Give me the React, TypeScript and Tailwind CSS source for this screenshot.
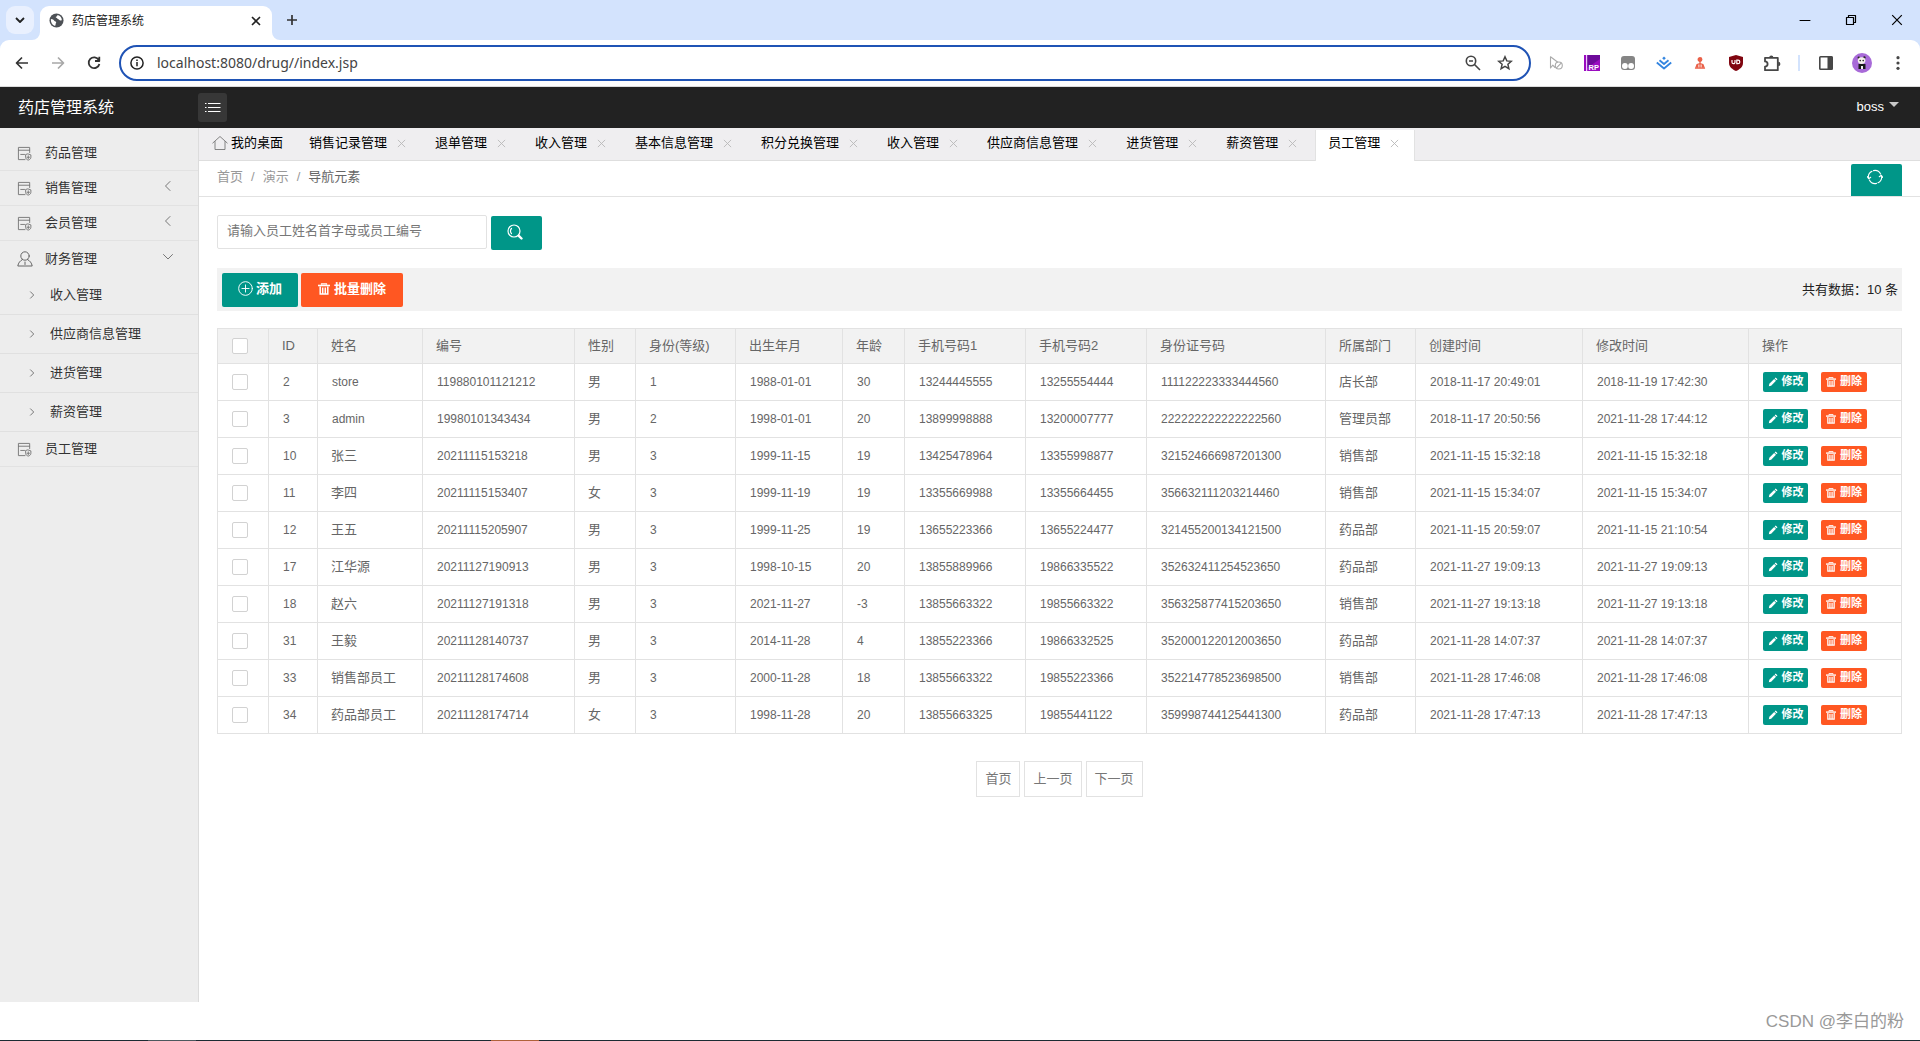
import React from "react";

const SANS = "font-['Liberation_Sans','Noto_Sans_CJK_SC',sans-serif]";

type IconProps = { className?: string };

const stroke = {
  fill: "none",
  stroke: "currentColor",
  strokeLinecap: "round" as const,
  strokeLinejoin: "round" as const,
};

function CloseIcon({ className }: IconProps) {
  return (
    <svg viewBox="0 0 10 10" className={className} {...stroke} strokeLinecap="butt">
      <path d="M1 1 L9 9 M9 1 L1 9" />
    </svg>
  );
}

function GlobeIcon() {
  return (
    <svg viewBox="0 0 16 16" className="size-[15px]">
      <circle cx="8" cy="8" r="7.5" fill="#4d5156" />
      <path d="M2 6.5c2 .2 3 .6 3.400 1.600.3.900 1.600.6 2.100 1.400.6 1-.7 1.700-.5 2.700.2.900-.6 1.600-1.200 1.500C3.300 12.700 1.700 10 2 6.500z" fill="#fff" />
      <path d="M8.500 2.100c1 .500.300 1.400-.500 1.600-1 .200-1 1.100-.2 1.300 1.200.3 1 1.500 2.200 1.700.9.200 1.200 1.300 2.200 1.200l1.500-.2C13.800 5 11.800 2.500 8.500 2.100z" fill="#fff" />
    </svg>
  );
}

function NoteIcon() {
  return (
    <svg viewBox="0 0 16 16" className="size-[15px] text-[#777]" {...stroke} strokeWidth="1">
      <path d="M8.500 14.500H1.500v-13h12V7M1.500 4.500h12M4 9h4" />
      <path d="M12 8.500l2.800 1v2.500c0 1.600-1.200 2.600-2.800 3-1.600-.4-2.800-1.400-2.800-3V9.500z" />
      <path d="M12 10.500v3M10.700 12h2.600" />
    </svg>
  );
}

function UserIcon() {
  return (
    <svg viewBox="0 0 16 16" className="size-4 text-[#666]" {...stroke} strokeWidth="1">
      <circle cx="8" cy="5" r="4.200" />
      <path d="M5.500 8.500C3 9.800 1.300 12 .800 15h14.400c-.5-3-2.200-5.200-4.700-6.500M8 11v2.500" />
    </svg>
  );
}

function TrashIcon({ className }: IconProps) {
  return (
    <svg viewBox="0 0 12 12" className={className} fill="none" stroke="currentColor">
      <path d="M0 2.500h12" strokeWidth="1.600" />
      <path d="M3.500 1.800V.8h5v1" strokeWidth="1.200" />
      <path d="M2.200 3.500v7.500h7.600V3.500M4.700 4.500v6M7.300 4.500v6" strokeWidth="1.500" />
    </svg>
  );
}

function PencilIcon() {
  return (
    <svg viewBox="0 0 12 12" className="size-[10px]" fill="currentColor">
      <path d="M9.200.6 11.400 2.800 10.200 4 8 1.800zM7.400 2.400 9.600 4.600 3.800 10.400 1 11.200 1.600 8.200z" />
    </svg>
  );
}

function BrowserTabs() {
  return (
    <div className="flex h-10 items-end bg-[#d3e3fd] pl-[6px]">
      <button aria-label="搜索标签页" className="mb-[6px] flex size-7 items-center justify-center rounded-[9px] bg-[#e9f0fe]">
        <svg viewBox="0 0 10 10" className="size-[10px] text-[#222]" {...stroke} strokeWidth="1.800" strokeLinecap="butt">
          <path d="M1 3l4 4 4-4" />
        </svg>
      </button>
      <div className="relative ml-[6px] flex h-[34px] w-[232px] items-center rounded-t-[9px] bg-white pr-[11px] pb-[5px] pl-[9px]">
        <svg viewBox="0 0 8 8" className="absolute bottom-0 -left-2 size-2"><path d="M8 0v8H0A8 8 0 0 0 8 0z" fill="#fff" /></svg>
        <svg viewBox="0 0 8 8" className="absolute -right-2 bottom-0 size-2"><path d="M0 0v8h8A8 8 0 0 1 0 0z" fill="#fff" /></svg>
        <GlobeIcon />
        <span className="ml-2 flex-1 text-xs text-[#222]">药店管理系统</span>
        <button aria-label="关闭标签页" className="text-[#222]"><CloseIcon className="size-[10px] stroke-[1.600]" /></button>
      </div>
      <button aria-label="新标签页" className="mb-[14px] ml-[14px] text-[#333]">
        <svg viewBox="0 0 12 12" className="size-3" {...stroke} strokeWidth="1.700" strokeLinecap="butt"><path d="M6 1v10M1 6h10" /></svg>
      </button>
      <div className="mb-[14px] ml-auto flex items-center gap-[34px] pr-[17px] text-black">
        <button aria-label="最小化"><svg viewBox="0 0 12 12" className="size-3" {...stroke}><path d="M1 6.500h10" /></svg></button>
        <button aria-label="还原">
          <svg viewBox="0 0 12 12" className="size-3" {...stroke} strokeWidth="1.200"><path d="M1.500 3.500h7v7h-7zM3.500 3.500v-2h7v7h-2" /></svg>
        </button>
        <button aria-label="关闭"><CloseIcon className="size-3" /></button>
      </div>
    </div>
  );
}

function Extensions() {
  return (
    <div className="flex items-center">
      {[
        <svg key="a" viewBox="0 0 16 16" className="size-4 text-[#aaa]" {...stroke} strokeWidth="1.100">
          <path d="M7 12.500 4.800 10.200 2.500 13V1.800L9.500 7" /><circle cx="10.800" cy="10.500" r="3.500" /><path d="M8.500 12.800l4.600-4.600" />
        </svg>,
        <svg key="b" viewBox="0 0 16 16" className="size-4">
          <rect width="16" height="16" fill="#9a0cc0" /><path d="M3 0h13v4L3 13z" fill="#6d0a9a" /><rect x="2" width="1.200" height="16" fill="#f0c8ff" />
          <text x="4.500" y="14.500" fontSize="7.500" fontWeight="700" fill="#fff">RP</text>
        </svg>,
        <svg key="c" viewBox="0 0 16 16" className="size-4">
          <rect x="1" y="1" width="14" height="14" rx="3" fill="#858585" /><circle cx="4.900" cy="11" r="2.900" fill="#fff" /><circle cx="11.100" cy="11" r="2.900" fill="#fff" />
        </svg>,
        <svg key="d" viewBox="0 0 16 16" className="size-4 text-[#3385e0]" {...stroke} strokeWidth="1.800" strokeLinecap="butt">
          <path d="M.800 7.500 8 13.500l7.200-6M3.500 5.200 8 9l4.500-3.800" /><path d="M8 1.500 9.800 3.200 8 4.900 6.200 3.200z" fill="currentColor" stroke="none" />
        </svg>,
        <svg key="e" viewBox="0 0 16 16" className="size-4 text-[#ea6048]" {...stroke} strokeWidth="1.300">
          <circle cx="8" cy="4.500" r="1.800" fill="currentColor" /><path d="M8 6v7M8 8.500l-3 1.200L3.800 13M8 8.500l3 1.200 1.200 3.300M5.800 10.500v2.500M10.200 10.500v2.500M3.500 13.200h9" />
        </svg>,
        <svg key="f" viewBox="0 0 16 16" className="size-4">
          <path d="M8 0 15 2v6c0 4-3.500 6.500-7 8-3.500-1.500-7-4-7-8V2z" fill="#800610" />
          <path d="M4 5v2.200a1.500 1.500 0 0 0 3 0V5M8.800 5.100h1.200a1.800 1.800 0 0 1 0 3.600H8.800z" fill="none" stroke="#fff" strokeWidth="1.200" />
        </svg>,
        <svg key="g" viewBox="0 0 18 18" className="size-[18px] text-[#474747]" fill="none" stroke="currentColor" strokeWidth="1.800" strokeLinejoin="round">
          <path d="M2 3.800h12.800v12.400H2v-3.600a2.600 2.600 0 0 0 0-5.200z" />
          <path d="M6.200 3.500a2.100 2.100 0 0 1 4.200 0zM15.200 7.700a2.200 2.200 0 0 1 0 4.400z" fill="currentColor" stroke="none" />
        </svg>,
      ].map((icon, i) => (
        <button key={i} aria-label="扩展程序" className="flex h-8 w-9 items-center justify-center">{icon}</button>
      ))}
      <div className="mx-2 h-4 w-[2px] bg-[#d3e3fd]" />
      <button aria-label="侧边栏" className="flex h-8 w-9 items-center justify-center">
        <svg viewBox="0 0 16 16" className="size-4"><rect x="1.800" y="1.800" width="12.400" height="12.400" rx=".8" fill="#fff" stroke="#474747" strokeWidth="1.600" /><rect x="9.500" y="1.500" width="5" height="13" fill="#474747" /></svg>
      </button>
      <button aria-label="个人资料" className="flex h-8 w-9 items-center justify-center">
        <svg viewBox="0 0 20 20" className="size-5">
          <circle cx="10" cy="10" r="10" fill="#a86ad8" /><path d="M6.500 16v-5h7v5z" fill="#181818" /><rect x="9" y="13" width="2" height="3" fill="#eee" />
          <circle cx="6.800" cy="4.800" r="1.200" fill="#222" /><circle cx="12.400" cy="4.500" r="1.200" fill="#222" /><ellipse cx="9.600" cy="7.600" rx="3.800" ry="3.400" fill="#f4f0ea" />
          <circle cx="8.200" cy="7.600" r=".8" fill="#222" /><circle cx="11.200" cy="7.600" r=".8" fill="#222" />
        </svg>
      </button>
      <button aria-label="菜单" className="flex h-8 w-9 items-center justify-center">
        <svg viewBox="0 0 16 16" className="size-4" fill="#474747"><circle cx="8" cy="2.700" r="1.600" /><circle cx="8" cy="8" r="1.600" /><circle cx="8" cy="13.300" r="1.600" /></svg>
      </button>
    </div>
  );
}

function AddressBar() {
  return (
    <div className="bg-[#d3e3fd]">
      <div className="flex h-[47px] items-center rounded-t-[9px] border-b border-[#dcdcdc] bg-white pr-1">
        <div className="flex w-[119px] gap-5 pl-[14px]">
          <button aria-label="后退" className="text-[#333]">
            <svg viewBox="0 0 16 16" className="size-4" {...stroke} strokeWidth="1.700" strokeLinecap="butt"><path d="M14 8H3M8 2.500 2.500 8 8 13.500" /></svg>
          </button>
          <button aria-label="前进" className="text-[#a8a8a8]">
            <svg viewBox="0 0 16 16" className="size-4" {...stroke} strokeWidth="1.700" strokeLinecap="butt"><path d="M2 8h11M8 2.500 13.500 8 8 13.500" /></svg>
          </button>
          <button aria-label="刷新" className="text-[#333]">
            <svg viewBox="0 0 16 16" className="size-4" {...stroke} strokeWidth="1.800" strokeLinecap="butt"><path d="M12.800 5A5.400 5.400 0 1 0 13.400 9M13.300 1.800V6H9" /></svg>
          </button>
        </div>
        <div className="flex h-9 flex-1 items-center rounded-full border-2 border-[#1f53b5] pr-4 pl-[9px]">
          <svg viewBox="0 0 14 14" className="size-[14px] text-[#222]" fill="none" stroke="currentColor" strokeWidth="1.500"><circle cx="7" cy="7" r="6.100" /><path d="M7 6v4.200M7 3.600v1.500" /></svg>
          <input aria-label="地址" defaultValue="localhost:8080/drug//index.jsp" className="ml-[13px] min-w-0 flex-1 bg-transparent font-['Noto_Sans','Open_Sans',sans-serif] text-sm text-[#444] outline-none" />
          <button aria-label="缩放" className="mr-4 text-[#444]">
            <svg viewBox="0 0 16 16" className="size-4" {...stroke} strokeWidth="1.600" strokeLinecap="butt"><circle cx="6" cy="6" r="4.700" /><path d="M9.500 9.500l5.500 5.500M4 6h4" /></svg>
          </button>
          <button aria-label="收藏" className="text-[#444]">
            <svg viewBox="0 0 16 16" className="size-4" {...stroke} strokeWidth="1.500" strokeLinejoin="miter"><path d="M8 1.800l1.800 4.100 4.500.4-3.400 3 1 4.400L8 11.400l-3.900 2.300 1-4.400-3.400-3 4.500-.4z" /></svg>
          </button>
        </div>
        <div className="ml-[7px]"><Extensions /></div>
      </div>
    </div>
  );
}

function AppHeader() {
  return (
    <header className="flex h-[41px] items-center bg-[#222] text-white">
      <h1 className="w-[198px] pl-[18px] text-base">药店管理系统</h1>
      <button aria-label="折叠菜单" className="flex size-[29px] items-center justify-center rounded-[3px] bg-[#373737]">
        <svg viewBox="0 0 16 12" className="h-3 w-4" fill="none" stroke="currentColor" strokeWidth="1"><path d="M0 1.500h1.500M3 1.500h12.500M0 5.500h1.500M3 5.500h12.500M0 9.500h1.500M3 9.500h12.500" /></svg>
      </button>
      <button className="mr-[21px] ml-auto flex items-center gap-[5px] pb-[2px] text-[13px]">
        boss
        <svg viewBox="0 0 10 5" className="mb-1 h-[5px] w-[10px]" fill="#c8c8c8"><path d="M0 0h10L5 5z" /></svg>
      </button>
    </header>
  );
}

const MENU = [
  { label: "药品管理" },
  { label: "销售管理", arrow: "left" },
  { label: "会员管理", arrow: "left" },
  { label: "财务管理", arrow: "down", children: ["收入管理", "供应商信息管理", "进货管理", "薪资管理"] },
  { label: "员工管理" },
];

function Sidebar() {
  return (
    <nav className="w-[199px] shrink-0 border-r border-[#dcdcdc] bg-[#ededed] pt-2 text-[13px] text-[#333]">
      {MENU.map((item) => (
        <div key={item.label}>
          <a href="#" className={item.children ? "flex h-[35px] items-center pl-[17px]" : "flex h-[35px] items-center border-b border-[#e2e2e2] pl-[17px]"}>
            <span className="w-7">{item.children ? <UserIcon /> : <NoteIcon />}</span>
            <span className="flex-1">{item.label}</span>
            {item.arrow && (
              <svg viewBox="0 0 10 10" className="mr-[25px] mb-1 size-[10px] text-[#777]" {...stroke}>
                <path d={item.arrow === "left" ? "M7 .5 2.500 5 7 9.500" : "M.5 2.500 5 7l4.500-4.500"} />
              </svg>
            )}
          </a>
          {item.children?.map((c) => (
            <a key={c} href="#" className="flex h-[39px] items-center border-b border-[#e0e0e0] pl-[28px]">
              <svg viewBox="0 0 8 8" className="mr-[14px] size-2 text-[#777]" {...stroke}><path d="M2.500 .8 5.700 4 2.500 7.200" /></svg>
              {c}
            </a>
          ))}
        </div>
      ))}
    </nav>
  );
}

const TABS = ["销售记录管理", "退单管理", "收入管理", "基本信息管理", "积分兑换管理", "收入管理", "供应商信息管理", "进货管理", "薪资管理", "员工管理"];

function PageTabs() {
  return (
    <div className="flex h-[33px] items-end bg-[#efeef0] text-[13px] text-black shadow-[inset_0_-1px_0_#dedede]">
      <a href="#" className="mr-[12px] flex h-[31px] items-center gap-[3px] pb-[6px] pl-[13px]">
        <svg viewBox="0 0 16 16" className="size-4 text-[#777]" {...stroke} strokeWidth=".9"><path d="M.8 8 8 1.500 15.200 8M3 6.500v8h10v-8" /></svg>
        我的桌面
      </a>
      {TABS.map((t, i) => (
        <div key={i} className={i === TABS.length - 1 ? "ml-[3px] flex h-[31px] items-center gap-[10px] border-x border-[#e2e2e2] bg-white pr-[15px] pb-[6px] pl-3" : "flex h-[31px] items-center gap-[10px] pr-[15px] pb-[6px] pl-[14px]"}>
          <a href="#">{t}</a>
          <button aria-label={"关闭" + t} className="text-[#b8b8b8]"><CloseIcon className="mt-[2px] size-[9px]" /></button>
        </div>
      ))}
    </div>
  );
}

function Breadcrumb() {
  return (
    <div className="flex h-9 items-end justify-between border-b border-[#e2e2e2] px-[18px] text-[13px]">
      <div className="flex h-8 items-center gap-2 pb-[6px] text-[#999]">
        <a href="#">首页</a>
        <span>/</span>
        <a href="#">演示</a>
        <span>/</span>
        <span className="text-[#666]">导航元素</span>
      </div>
      <button aria-label="刷新页面" className="flex h-8 w-[51px] items-center justify-center rounded-t-[2px] bg-[#009688] pr-[3px] pb-[6px] text-white">
        <svg viewBox="0 0 16 16" className="size-4" {...stroke} strokeWidth="1.100"><path d="M1.600 9.500A6.500 6.500 0 0 1 5 2.200M6.500 1.600A6.500 6.500 0 0 1 13.600 5M14.400 6.500A6.500 6.500 0 0 1 11 13.800M9.500 14.400A6.500 6.500 0 0 1 2.400 11M.3 7.600 1.700 9.700l2-1.400M15.700 8.400l-1.400-2.100-2 1.400" /></svg>
      </button>
    </div>
  );
}

const COLUMNS = [
  ["ID", "w-[49px]"], ["姓名", "w-[105px]"], ["编号", "w-[152px]"], ["性别", "w-[61px]"], ["身份(等级)", "w-[100px]"],
  ["出生年月", "w-[107px]"], ["年龄", "w-[62px]"], ["手机号码1", "w-[121px]"], ["手机号码2", "w-[121px]"], ["身份证号码", "w-[179px]"],
  ["所属部门", "w-[90px]"], ["创建时间", "w-[167px]"], ["修改时间", "w-[166px]"], ["操作", "w-[153px]"],
];

const ROWS = [
  ["2", "store", "119880101121212", "男", "1", "1988-01-01", "30", "13244445555", "13255554444", "111122223333444560", "店长部", "2018-11-17 20:49:01", "2018-11-19 17:42:30"],
  ["3", "admin", "19980101343434", "男", "2", "1998-01-01", "20", "13899998888", "13200007777", "222222222222222560", "管理员部", "2018-11-17 20:50:56", "2021-11-28 17:44:12"],
  ["10", "张三", "20211115153218", "男", "3", "1999-11-15", "19", "13425478964", "13355998877", "321524666987201300", "销售部", "2021-11-15 15:32:18", "2021-11-15 15:32:18"],
  ["11", "李四", "20211115153407", "女", "3", "1999-11-19", "19", "13355669988", "13355664455", "356632111203214460", "销售部", "2021-11-15 15:34:07", "2021-11-15 15:34:07"],
  ["12", "王五", "20211115205907", "男", "3", "1999-11-25", "19", "13655223366", "13655224477", "321455200134121500", "药品部", "2021-11-15 20:59:07", "2021-11-15 21:10:54"],
  ["17", "江华源", "20211127190913", "男", "3", "1998-10-15", "20", "13855889966", "19866335522", "352632411254523650", "药品部", "2021-11-27 19:09:13", "2021-11-27 19:09:13"],
  ["18", "赵六", "20211127191318", "男", "3", "2021-11-27", "-3", "13855663322", "19855663322", "356325877415203650", "销售部", "2021-11-27 19:13:18", "2021-11-27 19:13:18"],
  ["31", "王毅", "20211128140737", "男", "3", "2014-11-28", "4", "13855223366", "19866332525", "352000122012003650", "药品部", "2021-11-28 14:07:37", "2021-11-28 14:07:37"],
  ["33", "销售部员工", "20211128174608", "男", "3", "2000-11-28", "18", "13855663322", "19855223366", "352214778523698500", "销售部", "2021-11-28 17:46:08", "2021-11-28 17:46:08"],
  ["34", "药品部员工", "20211128174714", "女", "3", "1998-11-28", "20", "13855663325", "19855441122", "359998744125441300", "药品部", "2021-11-28 17:47:13", "2021-11-28 17:47:13"],
];

function Check({ label }: { label: string }) {
  return <input type="checkbox" aria-label={label} className="block size-4 appearance-none rounded-[2px] border border-[#d2d2d2] bg-white checked:bg-[#009688]" />;
}

function StaffTable() {
  return (
    <table className="mt-[17px] w-full table-fixed border-collapse text-left text-[#666]">
      <thead>
        <tr className="h-[35px] bg-[#f2f2f2] text-[13px]">
          <th className="w-[51px] border border-[#e2e2e2] pl-[14px]"><Check label="全选" /></th>
          {COLUMNS.map(([name, width]) => (
            <th key={name} className={"border border-[#e2e2e2] pl-[13px] font-normal whitespace-nowrap " + width}>{name}</th>
          ))}
        </tr>
      </thead>
      <tbody>
        {ROWS.map((row) => (
          <tr key={row[0]} className="h-[37px]">
            <td className="border border-[#e2e2e2] pl-[14px]"><Check label={"选择 " + row[1]} /></td>
            {row.map((cell, i) => (
              <td key={i} className={/[\u4e00-\u9fff]/.test(cell) ? "border border-[#e2e2e2] pl-[13px] text-[13px] leading-4 whitespace-nowrap" : "border border-[#e2e2e2] pl-[14px] text-xs whitespace-nowrap"}>{cell}</td>
            ))}
            <td className="border border-[#e2e2e2] pl-[14px]">
              <div className="flex gap-[13px] text-[11px] font-bold text-white">
                <button className="flex h-5 w-[45px] items-center justify-center gap-1 rounded-[2px] bg-[#009688] pb-px"><PencilIcon />修改</button>
                <button className="flex h-5 w-[46px] items-center justify-center gap-1 rounded-[2px] bg-[#ff5722] pb-px"><TrashIcon className="size-[10px]" />删除</button>
              </div>
            </td>
          </tr>
        ))}
      </tbody>
    </table>
  );
}

function Content() {
  return (
    <div className="px-[18px] pt-[18px]">
      <form className="flex items-start gap-1" onSubmit={(e) => e.preventDefault()}>
        <input aria-label="搜索员工" placeholder="请输入员工姓名首字母或员工编号" className="h-[34px] w-[270px] rounded-[2px] border border-[#e2e2e2] px-[9px] pb-[3px] text-[13px] outline-none placeholder:text-[#777]" />
        <button aria-label="搜索" className="mt-px flex h-[34px] w-[51px] items-center justify-center rounded-[2px] bg-[#009688] pr-[3px] pb-[2px] text-white">
          <svg viewBox="0 0 16 16" className="size-4" {...stroke} strokeWidth="1.200"><circle cx="7" cy="7" r="6" /><path d="M4.500 9.500a3.500 3.500 0 0 1 0-5" /><path d="M11.800 11.800l2.700 2.700" strokeWidth="2.400" /></svg>
        </button>
      </form>
      <div className="mt-[18px] flex h-[43px] items-center gap-[3px] bg-[#f2f2f2] pr-1 pl-[5px] text-[13px]">
        <button className="flex h-[34px] w-[76px] items-center justify-center gap-[3px] rounded-[2px] bg-[#009688] pb-[2px] font-bold text-white">
          <svg viewBox="0 0 16 16" className="size-[15px]" {...stroke} strokeWidth="1"><circle cx="8" cy="8" r="7.300" /><path d="M8 4.200v7.600M4.200 8h7.600" /></svg>
          添加
        </button>
        <button className="flex h-[34px] w-[102px] items-center justify-center gap-1 rounded-[2px] bg-[#ff5722] pb-[2px] font-bold text-white">
          <TrashIcon className="size-3" />
          批量删除
        </button>
        <span className="ml-auto text-[#222]">共有数据：10 条</span>
      </div>
      <StaffTable />
      <div className="mt-[27px] flex justify-center gap-1 text-[13px] text-[#777]">
        {["首页", "上一页", "下一页"].map((p) => (
          <a key={p} href="#" className="flex h-9 items-center border border-[#e2e2e2] px-2">{p}</a>
        ))}
      </div>
    </div>
  );
}

export default function App() {
  return (
    <div className={"flex min-h-screen flex-col bg-white " + SANS}>
      <BrowserTabs />
      <AddressBar />
      <AppHeader />
      <div className="flex flex-1">
        <Sidebar />
        <main className="min-w-0 flex-1">
          <PageTabs />
          <Breadcrumb />
          <Content />
        </main>
      </div>
      <footer>
        <div className="flex h-[38px] items-center justify-end pt-[2px] pr-4 text-[17px] text-[#999]">CSDN @李白的粉</div>
        <div className="flex h-px bg-[#1c2b33]">
          <span className="ml-[148px] w-12 bg-[#4c585e]" />
          <span className="ml-[295px] w-12 bg-[#b0623a]" />
        </div>
      </footer>
    </div>
  );
}
